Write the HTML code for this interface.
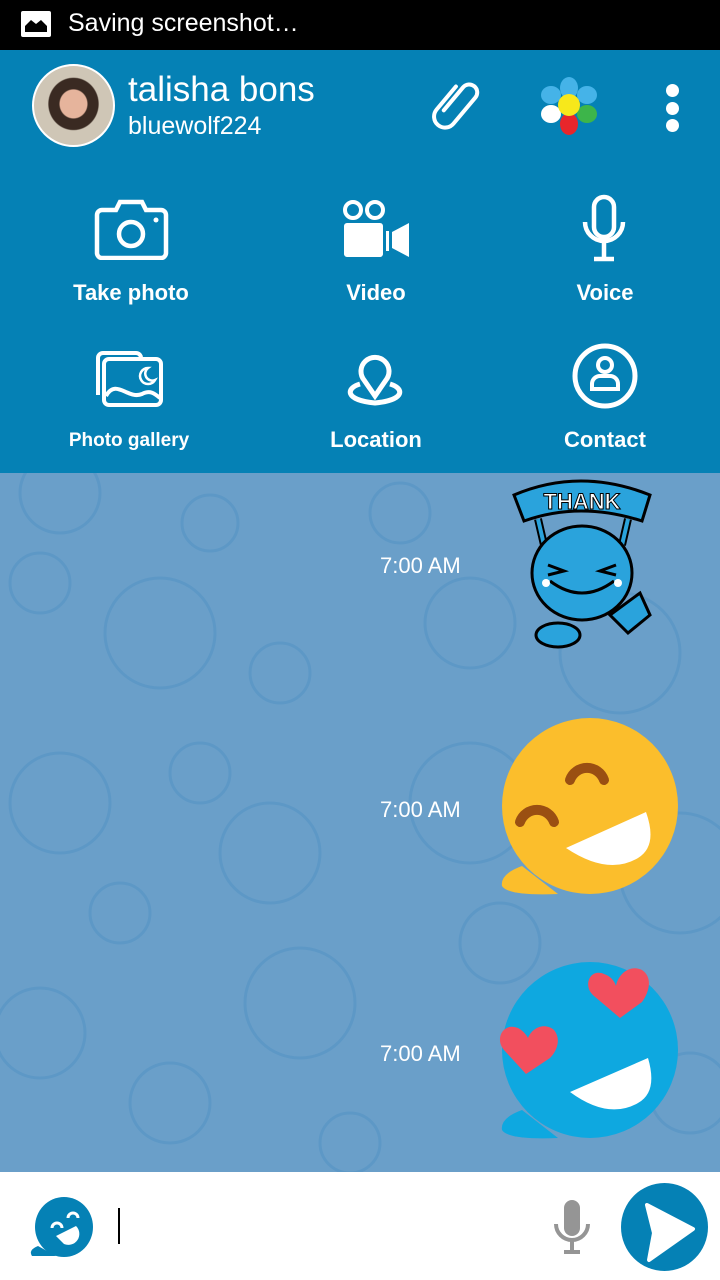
<!DOCTYPE html>
<html><head><meta charset="utf-8"><style>
*{margin:0;padding:0;box-sizing:border-box}
body{width:720px;height:1280px;overflow:hidden;font-family:"Liberation Sans",sans-serif;background:#fff;position:relative}
.abs{position:absolute}
.sb{top:0;left:0;width:720px;height:50px;background:#000;color:#fff;font-size:25px}
.hd{top:50px;left:0;width:720px;height:423px;background:#0581b5;color:#fff}
.chat{top:473px;left:0;width:720px;height:699px;background:#6a9fc9;overflow:hidden}
.lbl{font-weight:bold;font-size:22px;color:#fff;text-align:center;width:240px}
.time{color:#fff;font-size:22px;left:380px}
</style></head><body>
<div class="abs sb">
 <svg class="abs" style="left:21px;top:11px" width="30" height="26" viewBox="0 0 30 26"><rect x="0" y="0" width="30" height="26" rx="2" fill="#fff"/><path d="M4 21 L4 15 L10 9 L15 13 L20 9 L26 15 L26 21Z" fill="#000"/></svg>
 <div class="abs" style="left:68px;top:9px">Saving screenshot…</div>
</div>
<div class="abs hd">
 <div class="abs" style="left:32px;top:14px;width:83px;height:83px;border-radius:50%;background:radial-gradient(ellipse at 50% 48%,#e6b49c 0 24%,#3a2a22 26% 44%,#cfc6b6 46%);border:2px solid #fff"></div>
 <div class="abs" style="left:128px;top:20px;font-size:35px">talisha bons</div>
 <div class="abs" style="left:128px;top:62px;font-size:25px">bluewolf224</div>
 <svg class="abs" style="left:426px;top:26px" width="62" height="62" viewBox="0 0 62 62"><g transform="rotate(40 31 31)"><path d="M25 44 V14 a8 8 0 0 1 16 0 V48 a11 11 0 0 1 -22 0 V18" fill="none" stroke="#fff" stroke-width="4" stroke-linecap="round" transform="translate(-2 -2)"/></g></svg>
 <svg class="abs" style="left:538px;top:24px" width="62" height="62" viewBox="0 0 62 62"><ellipse cx="31" cy="14" rx="9" ry="11" fill="#45b3e8"/><ellipse cx="13" cy="21" rx="10" ry="9" fill="#45b3e8"/><ellipse cx="49" cy="21" rx="10" ry="9" fill="#45b3e8"/><ellipse cx="13" cy="40" rx="10" ry="9" fill="#fff"/><ellipse cx="49" cy="40" rx="10" ry="9" fill="#3db54a"/><ellipse cx="31" cy="50" rx="9" ry="11" fill="#e8262b"/><circle cx="31" cy="31" r="11" fill="#f7e81b"/></svg>
 <div class="abs" style="left:666px;top:34px;width:13px;height:13px;border-radius:50%;background:#fff"></div>
 <div class="abs" style="left:666px;top:52px;width:13px;height:13px;border-radius:50%;background:#fff"></div>
 <div class="abs" style="left:666px;top:69px;width:13px;height:13px;border-radius:50%;background:#fff"></div>

 <svg class="abs" style="left:94px;top:148px" width="75" height="62" viewBox="0 0 75 62"><path d="M8 12 H22 L26 4 H48 L52 12 H67 a5 5 0 0 1 5 5 V55 a5 5 0 0 1 -5 5 H8 a5 5 0 0 1 -5 -5 V17 a5 5 0 0 1 5 -5Z" fill="none" stroke="#fff" stroke-width="4.5"/><circle cx="37" cy="36" r="12" fill="none" stroke="#fff" stroke-width="4.5"/><circle cx="62" cy="22" r="2.5" fill="#fff"/></svg>
 <svg class="abs" style="left:342px;top:148px" width="70" height="62" viewBox="0 0 70 62"><circle cx="11" cy="12" r="8" fill="none" stroke="#fff" stroke-width="4"/><circle cx="33" cy="12" r="8" fill="none" stroke="#fff" stroke-width="4"/><rect x="2" y="25" width="39" height="34" rx="3" fill="#fff"/><rect x="44" y="33" width="3" height="20" fill="#fff"/><path d="M50 34 L67 25 V59 L50 50Z" fill="#fff"/></svg>
 <svg class="abs" style="left:582px;top:144px" width="46" height="70" viewBox="0 0 46 70"><rect x="12" y="3" width="20" height="40" rx="10" fill="none" stroke="#fff" stroke-width="4.5"/><path d="M3 28 a19 19 0 0 0 38 0 M22 48 V64 M12 65 H32" fill="none" stroke="#fff" stroke-width="4.5"/></svg>
 <div class="abs lbl" style="left:11px;top:230px">Take photo</div>
 <div class="abs lbl" style="left:256px;top:230px">Video</div>
 <div class="abs lbl" style="left:485px;top:230px">Voice</div>

 <svg class="abs" style="left:94px;top:300px" width="72" height="60" viewBox="0 0 72 60"><path d="M4 45 V8 a5 5 0 0 1 5 -5 H42 a5 5 0 0 1 5 5" fill="none" stroke="#fff" stroke-width="4"/><rect x="10" y="9" width="57" height="46" rx="5" fill="none" stroke="#fff" stroke-width="4"/><path d="M12 46 C22 28 34 50 48 44 C56 40 60 43 66 48" fill="none" stroke="#fff" stroke-width="4"/><path d="M54 18 a8 8 0 1 0 7 12 a7 7 0 0 1 -7 -12Z" fill="none" stroke="#fff" stroke-width="2.5"/></svg>
 <svg class="abs" style="left:342px;top:294px" width="66" height="66" viewBox="0 0 66 66"><path d="M33 52 L22 36 a14 14 0 1 1 22 0Z" fill="none" stroke="#fff" stroke-width="5"/><path d="M18 40 C4 44 2 56 33 59 C64 56 62 44 48 40" fill="none" stroke="#fff" stroke-width="5"/></svg>
 <svg class="abs" style="left:571px;top:292px" width="68" height="68" viewBox="0 0 68 68"><circle cx="34" cy="34" r="30" fill="none" stroke="#fff" stroke-width="5"/><circle cx="34" cy="23" r="7" fill="none" stroke="#fff" stroke-width="4"/><path d="M21 47 V42 a8 8 0 0 1 8 -8 H39 a8 8 0 0 1 8 8 V47 Z" fill="none" stroke="#fff" stroke-width="4"/></svg>
 <div class="abs lbl" style="left:9px;top:380px;font-size:19px">Photo gallery</div>
 <div class="abs lbl" style="left:256px;top:377px">Location</div>
 <div class="abs lbl" style="left:485px;top:377px">Contact</div>
</div>

<div class="abs chat">
 <svg class="abs" style="left:0;top:0" width="720" height="699" viewBox="0 0 720 699" fill="none" stroke="#5b97c6" stroke-width="3" opacity=".8">
  <circle cx="60" cy="20" r="40"/><circle cx="210" cy="50" r="28"/><circle cx="160" cy="160" r="55"/><circle cx="40" cy="110" r="30"/><circle cx="280" cy="200" r="30"/><circle cx="60" cy="330" r="50"/><circle cx="200" cy="300" r="30"/><circle cx="270" cy="380" r="50"/><circle cx="120" cy="440" r="30"/><circle cx="40" cy="560" r="45"/><circle cx="300" cy="530" r="55"/><circle cx="170" cy="630" r="40"/><circle cx="350" cy="670" r="30"/><circle cx="470" cy="150" r="45"/><circle cx="620" cy="180" r="60"/><circle cx="470" cy="330" r="60"/><circle cx="680" cy="400" r="60"/><circle cx="500" cy="470" r="40"/><circle cx="690" cy="620" r="40"/><circle cx="400" cy="40" r="30"/>
 </svg>
 <div class="abs time" style="top:80px">7:00 AM</div>
 <div class="abs time" style="top:324px">7:00 AM</div>
 <div class="abs time" style="top:568px">7:00 AM</div>
 <svg class="abs" style="left:510px;top:2px" width="145" height="182" viewBox="0 0 145 182">
  <path d="M4 20 Q70 -8 140 20 L132 46 Q70 26 14 46Z" fill="#2aa3dc" stroke="#000" stroke-width="3"/>
  <text x="72" y="34" text-anchor="middle" font-family="Liberation Sans" font-weight="bold" font-size="22" fill="#fff" stroke="#000" stroke-width="1">THANK</text>
  <path d="M28 44 L34 70 M118 44 L112 70" stroke="#000" stroke-width="8"/><path d="M28 44 L34 70 M118 44 L112 70" stroke="#2aa3dc" stroke-width="4"/>
  <ellipse cx="48" cy="160" rx="22" ry="12" fill="#2aa3dc" stroke="#000" stroke-width="3"/>
  <path d="M100 140 L130 118 L140 140 L118 158Z" fill="#2aa3dc" stroke="#000" stroke-width="3"/>
  <ellipse cx="72" cy="98" rx="50" ry="47" fill="#2aa3dc" stroke="#000" stroke-width="3"/>
  <path d="M38 90 L54 96 L38 100 M106 90 L90 96 L106 100 M40 106 Q72 130 104 106" fill="none" stroke="#000" stroke-width="3"/>
  <circle cx="36" cy="108" r="4" fill="#fff"/><circle cx="108" cy="108" r="4" fill="#fff"/>
 </svg>
 <svg class="abs" style="left:498px;top:243px" width="182" height="184" viewBox="0 0 182 184">
  <path d="M24 150 Q2 158 4 170 Q10 180 60 178 Z" fill="#fbbe2c"/>
  <ellipse cx="92" cy="90" rx="88" ry="88" fill="#fbbe2c"/>
  <path d="M22 106 a18 18 0 0 1 34 0 M72 64 a18 18 0 0 1 34 0" fill="none" stroke="#9a4f12" stroke-width="10" stroke-linecap="round"/>
  <path d="M68 132 L148 96 Q160 130 140 142 Q110 160 68 132Z" fill="#fff"/>
 </svg>
 <svg class="abs" style="left:498px;top:487px" width="182" height="184" viewBox="0 0 182 184">
  <path d="M24 150 Q2 158 4 170 Q10 180 60 178 Z" fill="#0ea8e0"/>
  <ellipse cx="92" cy="90" rx="88" ry="88" fill="#0ea8e0"/>
  <path d="M122 58 L96 36 C84 26 92 8 106 14 C112 16 116 20 118 26 C120 14 132 4 144 10 C156 18 150 34 144 42 Z" fill="#f24f5e"/>
  <path d="M28 114 L6 90 C-4 78 6 62 20 68 C24 70 28 74 30 78 C34 68 46 62 56 70 C64 80 58 92 52 98 Z" fill="#f24f5e"/>
  <path d="M72 132 L150 98 Q160 132 140 143 Q110 160 72 132Z" fill="#fff"/>
 </svg>
</div>

<div class="abs" style="top:1172px;left:0;width:720px;height:108px;background:#fff">
 <svg class="abs" style="left:28px;top:24px" width="66" height="62" viewBox="0 0 66 62"><path d="M10 50 Q0 54 4 60 L28 60Z" fill="#0581b5"/><ellipse cx="36" cy="31" rx="29" ry="30" fill="#0581b5"/><path d="M40 22 a5 5 0 0 1 10 0 M24 32 a5 5 0 0 1 10 0" fill="none" stroke="#fff" stroke-width="3"/><path d="M28 40 L48 30 a11 11 0 0 1 -12 18 Z" fill="#fff"/></svg>
 <div class="abs" style="left:118px;top:36px;width:2px;height:36px;background:#000"></div>
 <svg class="abs" style="left:552px;top:26px" width="40" height="58" viewBox="0 0 40 58"><rect x="12" y="2" width="16" height="36" rx="8" fill="#959595"/><path d="M4 26 a16 16 0 0 0 32 0 M20 42 V54 M12 54 H28" fill="none" stroke="#959595" stroke-width="4"/></svg>
 <div class="abs" style="left:621px;top:11px;width:87px;height:88px;border-radius:50%;background:#0581b5"></div>
 <svg class="abs" style="left:621px;top:11px" width="87" height="88" viewBox="0 0 87 88"><path d="M26 22 L72 46 L28 77 L33 50 Z" fill="#fff" stroke="#fff" stroke-width="4" stroke-linejoin="round"/></svg>
</div>
</body></html>
